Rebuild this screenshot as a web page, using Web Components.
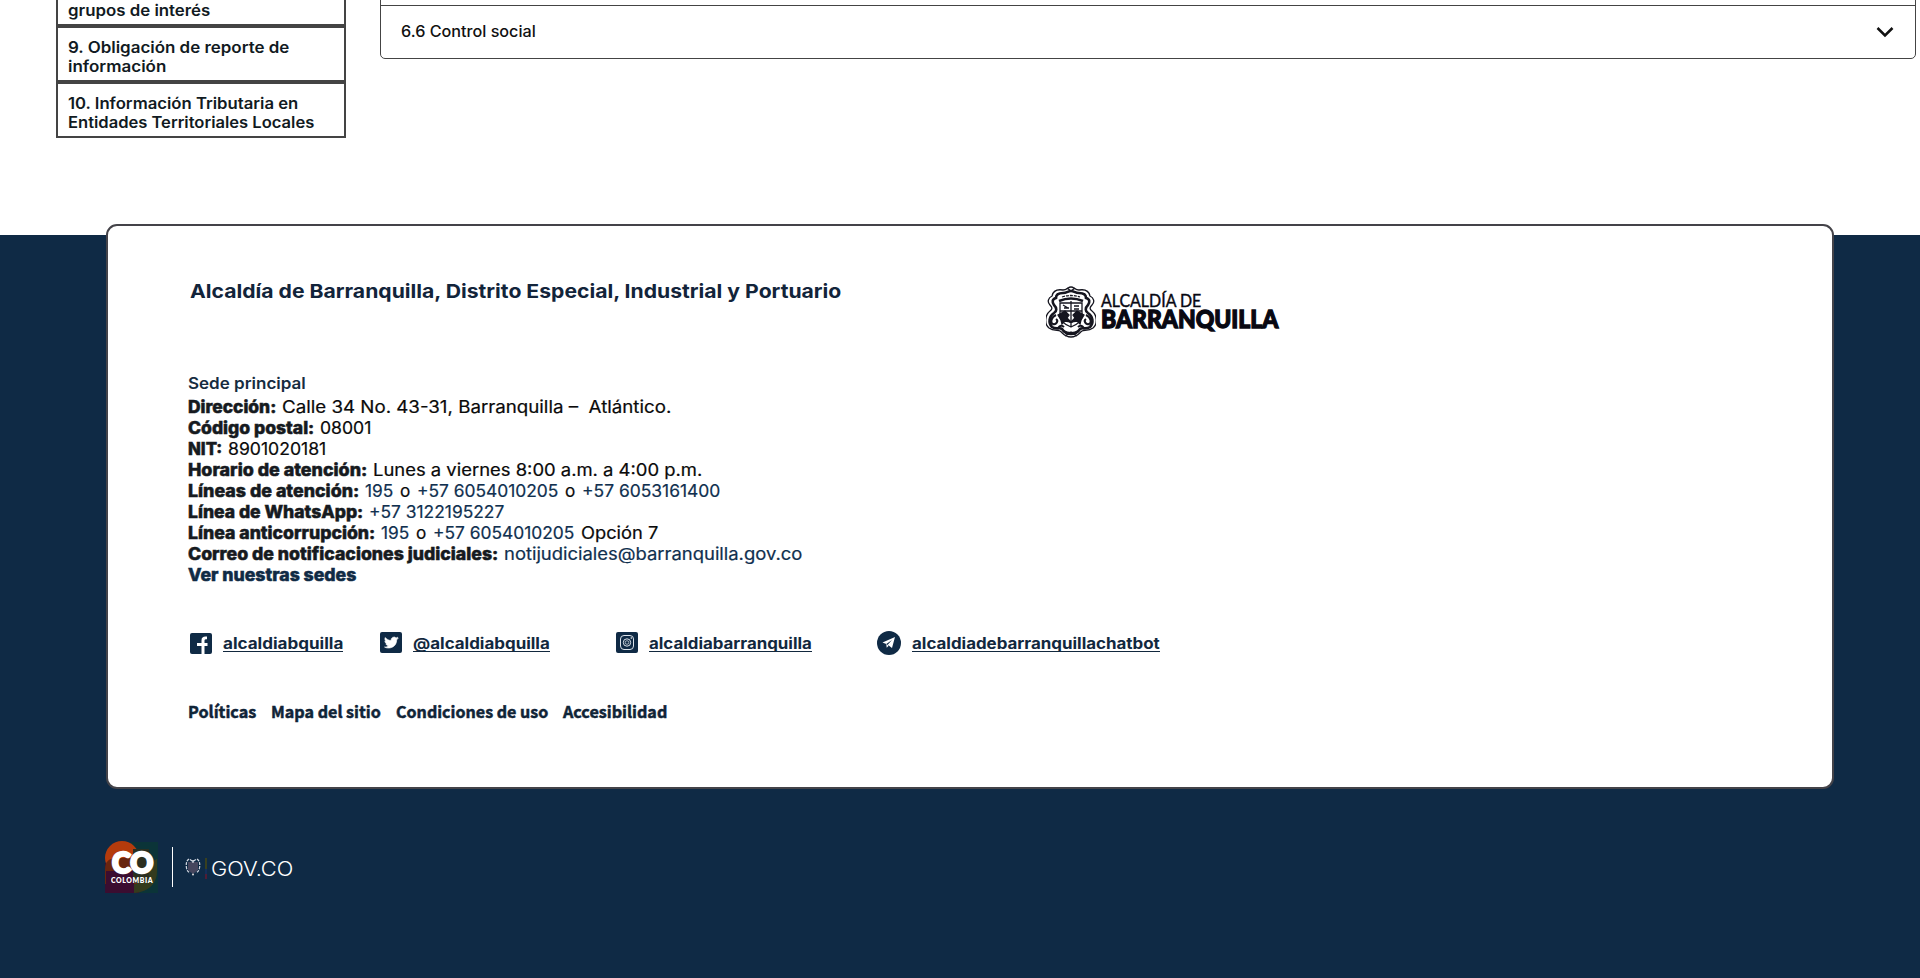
<!DOCTYPE html>
<html lang="es">
<head>
<meta charset="utf-8">
<title>Alcaldía de Barranquilla</title>
<style>
html,body{margin:0;padding:0;height:978px;overflow:hidden;background:#fff;font-family:Inter,sans-serif;color:#111}
</style>
</head>
<body>
<ab-page></ab-page>
<script>
const define=(name,html,after)=>{
  const t=document.createElement('template');t.innerHTML=html;
  customElements.define(name,class extends HTMLElement{
    constructor(){super();this.attachShadow({mode:'open'}).append(t.content.cloneNode(true));}
    connectedCallback(){if(after)after(this,this.shadowRoot);}
  });
};

/* One run of text, widened or condensed to fill the width in "w". */
define('fit-text',`<style>:host{display:inline-block;white-space:pre}span{display:inline-block;white-space:pre;transform-origin:0 50%;vertical-align:top}</style><span><slot></slot></span>`,(el,r)=>{
  const w=+el.getAttribute('w'),s=r.querySelector('span');
  el.style.width=w+'px';
  s.style.transform='scaleX('+((w+.3)/s.getBoundingClientRect().width).toFixed(4)+')';
});

define('side-item',`<style>:host{display:block;box-sizing:border-box;width:290px;height:56px;border:2px solid #444;padding:10px 9px 0 10px;font:600 15.4px/19px Inter,sans-serif;color:#111a22}::slotted(*){display:block}</style><slot></slot>`);

define('accordion-row',`<style>:host{display:flex;box-sizing:border-box;width:1536px;height:54px;border:1px solid #444;border-radius:0 0 5px 5px;justify-content:space-between;align-items:center;padding:0 21px 0 20px;font:500 15.5px/20px Inter,sans-serif;color:#111}svg{display:block}</style><slot></slot><svg width="18" height="12" viewBox="0 0 18 12"><path d="M1.500 2 9 9.500 16.500 2" fill="none" stroke="#111" stroke-width="2.500"/></svg>`);

define('city-crest',`<style>:host{display:block;width:50px;height:52px}</style>
<svg width="50" height="52" viewBox="0 0 50 52" fill="none" stroke="#15151f" stroke-width="1.3">
<path d="M25 1c-3 0-4 3-8 3-6-1-10 1-11 6-4 2-5 6-2 9 2 2 3 4 0 6-5 4-6 13-1 17 4 3 9 2 11 3 3 2 4 6 11 6s8-4 11-6c2-1 7 0 11-3 5-4 4-13-1-17-3-2-2-4 0-6 3-3 2-7-2-9-1-5-5-7-11-6-4 0-5-3-8-3z"/>
<path stroke-width="2.600" d="M25 5c-3 0-4 2-8 2-5 0-7 2-7 5-4 1-4 4-2 7 3 3 3 6 0 8-5 3-6 10-2 14 4 3 8 0 10 2 2 3 4 5 9 5s7-2 9-5c2-2 6 1 10-2 4-4 3-11-2-14-3-2-3-5 0-8 2-3 2-6-2-7 0-3-2-5-7-5-4 0-5-2-8-2z"/>
<path stroke-width="2.600" d="M13 15q12-5 24 0"/><path stroke-dasharray="3 1" d="M16 11q9-3 18 0"/>
<path d="M14 17v13c0 6 6 9 11 11 5-2 11-5 11-11V17zM25 15v26M14 25h22M17 19l5 3M28 20h5M28 23h5M18 22h5"/>
<path fill="#15151f" d="m12 29 7-4 4 4-2 3 4 4-6-1-3 3-1-4zM38 29l-7-4-4 4 2 3-4 4 6-1 3 3 1-4z"/>
<path stroke-width="2" d="M10 29c-5 2-6 8-3 9s6-3 3-5M40 29c5 2 6 8 3 9s-6-3-3-5M12 42q3-4 6-1M38 42q-3-4-6-1M17 45q8 4 16 0"/><path d="M21 2l4 3 4-3M19 50l6-4 6 4"/>
</svg>`);

define('city-logo',`<style>:host{display:flex;gap:5px;padding-top:7px;color:#080812}.t{padding-top:6px}.a,.b{display:block}.a{font:400 16.800px/18px Lato,sans-serif;-webkit-text-stroke:.4px}.b{font:900 24.600px/18px Lato,sans-serif;-webkit-text-stroke:1.3px}</style>
<city-crest></city-crest><div class="t"><fit-text class="a" w="100">ALCALDÍA DE</fit-text><fit-text class="b" w="177">BARRANQUILLA</fit-text></div>`);

define('info-line',`<style>:host{display:flex;gap:7px;height:21px;font:400 16.900px/21px Inter,sans-serif;color:#0a0a0a;white-space:pre;-webkit-text-stroke:.2px}::slotted(:not(.k):not(.v)){margin-left:-1px;margin-right:1px}::slotted(.k){font-weight:800;color:#161a20;-webkit-text-stroke:.5px}::slotted(.l){color:#10304f}::slotted(.v){font-weight:800;color:#102b45;-webkit-text-stroke:.5px}</style><slot></slot>`);

const icons={
facebook:`<svg width="22" height="22" viewBox="0 0 22 22"><rect y="1" width="22" height="21" rx="2" fill="#0f2a45"/><path d="M11.500 22v-8H7v-3h4.500V8.500C11.500 5.500 13 4.500 15.500 4.500H17v2.800h-1.200C14.800 7.300 14.500 8 14.500 9v2h3v3h-3v8z" fill="#fff"/></svg>`,
twitter:`<svg width="22" height="22" viewBox="0 0 22 22"><rect width="22" height="21" rx="2" fill="#0f2a45"/><path d="M18.200 6.300c-.5.2-1 .4-1.600.4.6-.3 1-.9 1.200-1.500-.5.3-1.100.5-1.800.7a2.900 2.900 0 0 0-4.900 2.600c-2.300-.1-4.400-1.200-5.800-3-.8 1.300-.4 3 .8 3.800-.4 0-.9-.1-1.200-.3 0 1.300.9 2.500 2.200 2.800-.4.100-.8.100-1.200 0 .3 1.100 1.400 2 2.600 2-1.100.900-2.600 1.400-4 1.200 4 2.500 12.200.700 12.200-7.200.6-.4 1.100-.9 1.500-1.500z" fill="#fff" stroke="#fff" stroke-width=".6"/></svg>`,
instagram:`<svg width="22" height="22" viewBox="0 0 22 22"><rect width="22" height="21" rx="2" fill="#0f2a45"/><g fill="none" stroke="#dbe2ea"><rect x="4.500" y="3.500" width="13" height="14" rx="3.500"/><circle cx="11" cy="10.500" r="3.700"/><circle cx="11" cy="10.500" r="1.800" stroke-width=".7"/></g><circle cx="15.300" cy="6" r=".8" fill="#fff"/></svg>`,
telegram:`<svg width="24" height="24" viewBox="0 0 24 24"><circle cx="12" cy="12" r="12" fill="#0f2a45"/><path d="M18 6 5.500 11.500l3.800 1.500L15 9l-4.300 4.700L15 17z" fill="#fff"/><path d="m9.300 13 .4 3.700 2-2" fill="#fff"/></svg>`};
define('social-link',`<style>:host{display:flex;align-items:center;height:24px;font:700 15.4px/20px Inter,sans-serif;color:#12283e}i{flex:none;width:33px}svg{display:block}::slotted(*){box-sizing:border-box;height:16px;border-bottom:1px solid #12283e;line-height:16px!important;margin-top:2px}</style><i></i><slot></slot>`,(el,r)=>{
  const k=el.getAttribute('icon'),i=r.querySelector('i');i.innerHTML=icons[k];if(k==='telegram')i.style.width='35px';
});

define('footer-card',`<style>
:host{display:block;box-sizing:border-box;width:1728px;height:565px;border:2px solid #444349;border-radius:11px;background:#fff;padding:53px 0 0 80px}
.head{display:grid;grid-template-columns:856px 1fr;height:94px;margin-left:2px}
.title{font:700 19px/26px Inter,sans-serif;color:#12243a}
.sede{display:block;height:24px;font:600 15.800px/22px Inter,sans-serif;color:#162c40}
.social{display:grid;grid-template-columns:190px 236px 261px 300px;margin:45px 0 0 2px}
.links{display:flex;gap:15px;margin-top:46px;font:700 16.300px/20px "Noto Sans CJK SC",sans-serif;color:#102437;-webkit-text-stroke:.5px}
</style>
<div class="head"><fit-text class="title" w="651">Alcaldía de Barranquilla, Distrito Especial, Industrial y Portuario</fit-text><city-logo></city-logo></div>
<fit-text class="sede" w="117.500">Sede principal</fit-text>
<info-line><fit-text class="k" w="88">Dirección:</fit-text><fit-text w="389">Calle 34 No. 43-31, Barranquilla –  Atlántico.</fit-text></info-line>
<info-line><fit-text class="k" w="126">Código postal:</fit-text><fit-text w="51">08001</fit-text></info-line>
<info-line><fit-text class="k" w="34">NIT:</fit-text><fit-text w="98">8901020181</fit-text></info-line>
<info-line><fit-text class="k" w="179">Horario de atención:</fit-text><fit-text w="329">Lunes a viernes 8:00 a.m. a 4:00 p.m.</fit-text></info-line>
<info-line><fit-text class="k" w="171">Líneas de atención:</fit-text><fit-text class="l" w="28">195</fit-text><fit-text w="10">o</fit-text><fit-text class="l" w="141">+57 6054010205</fit-text><fit-text w="10">o</fit-text><fit-text class="l" w="138">+57 6053161400</fit-text></info-line>
<info-line><fit-text class="k" w="175">Línea de WhatsApp:</fit-text><fit-text class="l" w="135">+57 3122195227</fit-text></info-line>
<info-line><fit-text class="k" w="187">Línea anticorrupción:</fit-text><fit-text class="l" w="28">195</fit-text><fit-text w="10">o</fit-text><fit-text class="l" w="141">+57 6054010205</fit-text><fit-text w="77">Opción 7</fit-text></info-line>
<info-line><fit-text class="k" w="310">Correo de notificaciones judiciales:</fit-text><fit-text class="l" w="298">notijudiciales@barranquilla.gov.co</fit-text></info-line>
<info-line><fit-text class="v" w="168">Ver nuestras sedes</fit-text></info-line>
<div class="social">
<social-link icon="facebook"><fit-text w="120">alcaldiabquilla</fit-text></social-link>
<social-link icon="twitter"><fit-text w="136.500">@alcaldiabquilla</fit-text></social-link>
<social-link icon="instagram"><fit-text w="162.500">alcaldiabarranquilla</fit-text></social-link>
<social-link icon="telegram"><fit-text w="247.500">alcaldiadebarranquillachatbot</fit-text></social-link>
</div>
<div class="links"><fit-text w="68">Políticas</fit-text><fit-text w="109.500">Mapa del sitio</fit-text><fit-text w="152">Condiciones de uso</fit-text><fit-text w="104">Accesibilidad</fit-text></div>`);

define('co-mark',`<style>:host{display:flex;flex-direction:column;align-items:center;box-sizing:border-box;width:53px;height:52px;position:relative;isolation:isolate;color:#fff;padding:7px 0 0 1px}svg{position:absolute;left:0;top:0;z-index:-1}.co{display:block;font:900 28px/28px Lato,sans-serif;-webkit-text-stroke:2.400px}.n{display:block;font:800 7px/8px Lato,sans-serif;letter-spacing:.6px}</style>
<svg width="53" height="52" viewBox="0 0 53 52"><path d="M26 1h27v51H26z" fill="#0b3438"/><path d="M0 22h34v30H0z" fill="#380f31"/><path d="M26 52c16 0 26-8 26-22V18L26 30z" fill="#343b1d"/><circle cx="17" cy="17" r="17" fill="#b43b0c"/><path d="M12 17h20v26H0V28q0-11 12-11z" fill="#68250f"/><path d="M1 30h28v22H1z" fill="#3b0d30"/><path d="M28 8h16v34H28z" fill="#2b2f20"/></svg>
<fit-text class="co" w="41">CO</fit-text><fit-text class="n" w="42">COLOMBIA</fit-text>`);

define('gov-brand',`<style>:host{display:flex;align-items:flex-start;color:#fff}.bar{width:1px;height:40px;background:#fff;margin:6px 12px 0 14px}.arms{margin:16px 4px 0 0}.flag{width:2px;height:21px;margin:17px 4px 0 0;background:linear-gradient(#39401f 0 50%,#142f59 50% 75%,#501d35 75%)}.g{font:300 19.600px/24px Inter,sans-serif;margin-top:16px}</style>
<co-mark></co-mark><div class="bar"></div>
<svg class="arms" width="16" height="20" viewBox="0 0 16 20"><path d="M3 5h10v8l-5 4-5-4z" fill="#46465e"/><path d="M8 3v3M5 2.500l3 2 3-2M4 2C1 4 1 7 1.500 11c.5 3 2 4 3.500 5M12 2c3 2 3 5 2.500 9-.5 3-2 4-3.500 5" fill="none" stroke="#d5dae3" stroke-width="1.2" stroke-dasharray="3 1"/><circle cx="8" cy="17.500" r="1" fill="#ddd"/></svg>
<div class="flag"></div><fit-text class="g" w="82">GOV.CO</fit-text>`);

define('ab-page',`<style>
:host{display:flex;flex-direction:column;height:978px;overflow:hidden;background:#fff}
main{display:flex;gap:34px;height:235px;padding-left:56px;box-sizing:border-box}
aside{margin-top:-30px}
.first{padding-top:29px}
.acc{margin-top:-48px}
footer{flex:1;background:#0f2a45;padding-left:106px}
footer-card{margin-top:-11px}
gov-brand{margin:52px 0 0 -1px}
</style>
<main>
<aside>
<side-item class="first"><fit-text w="142">grupos de interés</fit-text></side-item>
<side-item><fit-text w="221">9. Obligación de reporte de</fit-text><fit-text w="98">información</fit-text></side-item>
<side-item><fit-text w="230">10. Información Tributaria en</fit-text><fit-text w="246">Entidades Territoriales Locales</fit-text></side-item>
</aside>
<div class="acc"><accordion-row style="border-bottom:0;border-radius:0"></accordion-row><accordion-row style="margin-top:-1px"><fit-text w="134.500">6.6 Control social</fit-text></accordion-row></div>
</main>
<footer><footer-card></footer-card><gov-brand></gov-brand></footer>`);
</script>
</body>
</html>
